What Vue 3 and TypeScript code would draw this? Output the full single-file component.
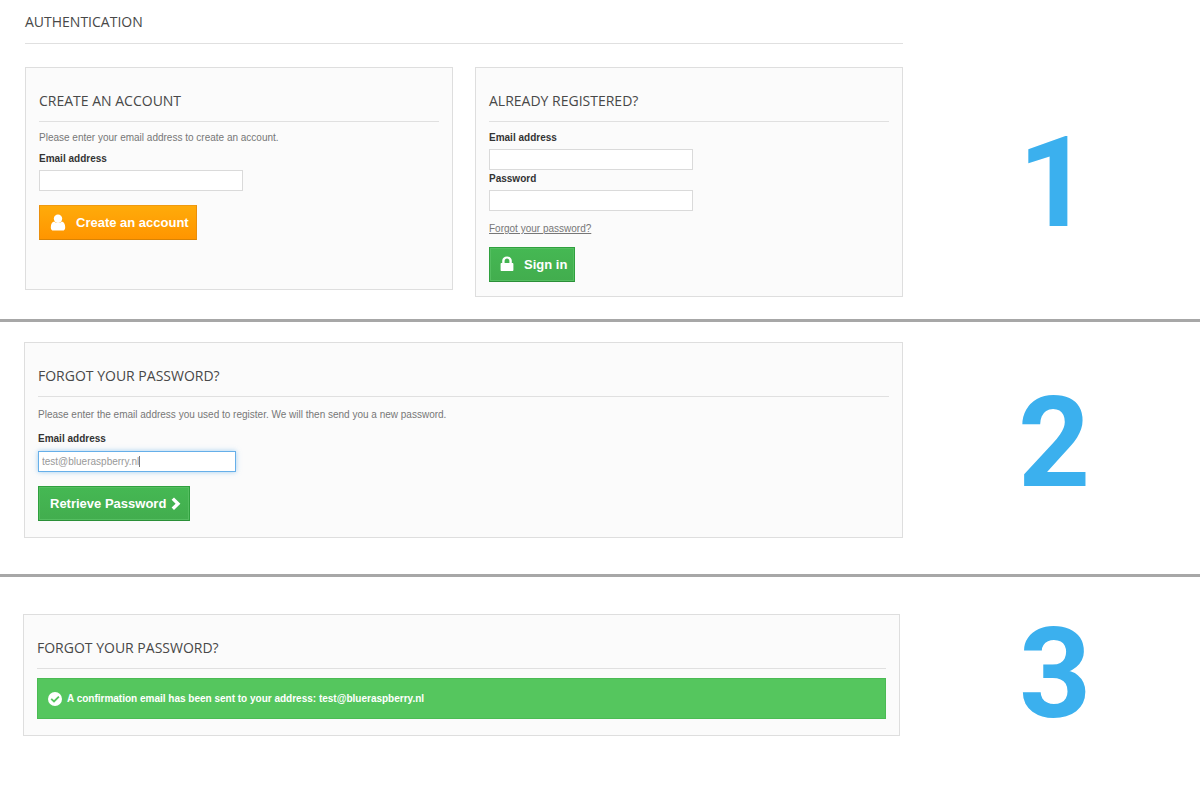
<script setup lang="ts">
import { onMounted, ref } from 'vue'

const createEmail = ref('')
const loginEmail = ref('')
const loginPassword = ref('')
const resetEmail = ref('test@blueraspberry.nl')
const resetField = ref<HTMLInputElement | null>(null)

onMounted(() => {
  const field = resetField.value
  if (!field) return
  field.focus()
  field.setSelectionRange(resetEmail.value.length, resetEmail.value.length)
})
</script>

<template>
  <main class="page">
    <section class="step step-one">
      <div class="content">
        <h1 class="title page-title">Authentication</h1>
        <div class="cards">
          <form class="card short" @submit.prevent>
            <h2 class="title">Create an account</h2>
            <p class="text">Please enter your email address to create an account.</p>
            <label class="label" for="create-email">Email address</label>
            <input id="create-email" v-model="createEmail" class="field" type="email" />
            <button class="button orange" type="submit">
              <svg class="icon" width="16" height="18" viewBox="0 0 16 18" aria-hidden="true">
                <path d="M0.800 13.200C0.800 10.200 2.200 8 4.300 7.600C6.500 9.600 9.500 9.600 11.700 7.600C13.800 8 15.200 10.200 15.200 13.200C15.200 15.500 14.300 16.600 12.500 16.600H3.500C1.700 16.600 0.800 15.500 0.800 13.200Z" />
                <circle cx="8" cy="4.800" r="4.200" />
              </svg>
              <span>Create an account</span>
            </button>
          </form>
          <form class="card" @submit.prevent>
            <h2 class="title">Already registered?</h2>
            <label class="label" for="login-email">Email address</label>
            <input id="login-email" v-model="loginEmail" class="field" type="email" />
            <label class="label tight" for="login-password">Password</label>
            <input id="login-password" v-model="loginPassword" class="field" type="password" />
            <a class="link" href="#forgot">Forgot your password?</a>
            <button class="button green" type="submit">
              <svg class="icon" width="14" height="18" viewBox="0 0 14 18" aria-hidden="true">
                <path fill-rule="evenodd" d="M2.200 7V4.800C2.200 2.200 4.200 0.400 7 0.400S11.800 2.200 11.800 4.800V7H12.300C13 7 13.400 7.400 13.400 8V14C13.400 14.700 13 15 12.300 15H1.700C1 15 0.600 14.700 0.600 14V8C0.600 7.400 1 7 1.700 7ZM4.600 7H9.400V5C9.400 3.500 8.400 2.600 7 2.600S4.600 3.500 4.600 5Z" />
              </svg>
              <span>Sign in</span>
            </button>
          </form>
        </div>
      </div>
      <div class="number">1</div>
    </section>

    <section id="forgot" class="step step-two">
      <form class="content card" @submit.prevent>
        <h2 class="title">Forgot your password?</h2>
        <p class="text">Please enter the email address you used to register. We will then send you a new password.</p>
        <label class="label" for="reset-email">Email address</label>
        <div class="field-wrap">
          <input id="reset-email" ref="resetField" v-model="resetEmail" class="field" type="text" />
          <span class="caret" aria-hidden="true"></span>
        </div>
        <button class="button green retrieve" type="submit">
          <span>Retrieve Password</span>
          <svg class="icon" width="10" height="14" viewBox="0 0 10 14" aria-hidden="true">
            <path d="M0.600 2.800L3 0.400L9.400 6.700L3 13L0.600 10.600L4.600 6.700Z" />
          </svg>
        </button>
      </form>
      <div class="number">2</div>
    </section>

    <section class="step step-three">
      <div class="content card">
        <h2 class="title">Forgot your password?</h2>
        <p class="alert" role="status">
          <svg width="14" height="14" viewBox="0 0 14 14" aria-hidden="true">
            <circle cx="7" cy="7" r="7" fill="#fff" />
            <path d="M3.200 6.800L6 9.400L10.900 4.600" fill="none" stroke="#55c65e" stroke-width="1.800" />
          </svg>
          <span>A confirmation email has been sent to your address: test@blueraspberry.nl</span>
        </p>
      </div>
      <div class="number">3</div>
    </section>
  </main>
</template>

<style>
body {
  margin: 0;
  background: #fff;
}
</style>

<style scoped>
.page {
  font-family: "Liberation Sans", Arial, sans-serif;
  font-size: 10px;
  line-height: 14px;
  color: #777;
}
.step {
  display: grid;
  grid-template-columns: minmax(0, 1fr) 182px;
  column-gap: 115px;
  align-items: start;
}
.step + .step {
  border-top: 3px solid #a7a7a7;
}
.step-one {
  padding: 12px 0 22px 25px;
}
.step-two {
  padding: 20px 0 36px 24px;
}
.step-three {
  padding: 37px 0 63px 23px;
  grid-template-columns: minmax(0, 1fr) 181px;
  column-gap: 119px;
}
.number {
  font: 700 126px/128px Roboto, sans-serif;
  color: #3bb0ee;
}
.step-one .number {
  margin-top: 107px;
}
.step-two .number {
  margin-top: 37px;
}
.step-three .number {
  margin-top: -4px;
}
.title {
  margin: 0;
  padding-bottom: 10px;
  border-bottom: 1px solid #e0e0e0;
  font: 500 14px/20px "Open Sans", sans-serif;
  text-transform: uppercase;
  color: #484848;
}
.page-title {
  padding-bottom: 11px;
  margin-bottom: 23px;
}
.cards {
  display: grid;
  grid-template-columns: 1fr 1fr;
  gap: 22px;
  align-items: start;
}
.card {
  box-sizing: border-box;
  display: flex;
  flex-direction: column;
  align-items: flex-start;
  padding: 23px 13px 14px;
  background: #fbfbfb;
  border: 1px solid #dedede;
}
.card.short {
  min-height: 223px;
}
.card .title {
  align-self: stretch;
  margin-bottom: 9px;
}
.text {
  margin: 0 0 7px;
}
.label {
  font-weight: 700;
  color: #333;
  margin-bottom: 4px;
}
.tight {
  margin-top: 2px;
}
.field {
  box-sizing: border-box;
  display: block;
  width: 204px;
  height: 21px;
  padding: 2px 3px;
  border: 1px solid #dadada;
  border-radius: 0;
  background: #fff;
  font: inherit;
  color: #999;
}
.field:focus {
  outline: none;
  border-color: #66afe9;
  box-shadow: 0 0 5px rgba(102, 175, 233, 0.6);
}
.field-wrap {
  position: relative;
}
.field-wrap .field {
  caret-color: transparent;
}
.caret {
  position: absolute;
  left: 101px;
  top: 5px;
  width: 1px;
  height: 11px;
  background: #777;
}
.link {
  margin-top: 11px;
  color: #777;
  text-decoration: underline;
}
.button {
  box-sizing: border-box;
  display: flex;
  align-items: center;
  gap: 10px;
  height: 35px;
  margin-top: 14px;
  padding: 0 7px 0 10px;
  border: 1px solid;
  font: 700 13px/18px "Liberation Sans", Arial, sans-serif;
  color: #fff;
}
.icon {
  fill: currentColor;
}
.orange {
  background: linear-gradient(#ffab0a, #ff9500);
  border-color: #f09a10 #ea8f0c #d98305;
}
.green {
  background: linear-gradient(#45b853, #42ad4e);
  border-color: #2fa03e #2fa03e #2b8f38;
  box-shadow: inset 0 0 0 1px #55be61;
}
.link + .button {
  margin-top: 11px;
}
.step-two .card {
  padding-bottom: 16px;
}
.step-two .title {
  margin-bottom: 11px;
}
.step-two .text {
  margin-bottom: 10px;
}
.step-two .label {
  margin-bottom: 5px;
}
.step-two .field {
  width: 198px;
}
.retrieve {
  gap: 5px;
  padding: 0 8px 0 11px;
}
.step-three .card {
  padding-bottom: 16px;
}
.alert {
  box-sizing: border-box;
  align-self: stretch;
  display: flex;
  align-items: center;
  gap: 5px;
  min-height: 41px;
  margin: 0;
  padding: 8px 10px;
  border: 1px solid #4bbb54;
  background: #55c65e;
  font-weight: 700;
  color: #fff;
}
</style>
